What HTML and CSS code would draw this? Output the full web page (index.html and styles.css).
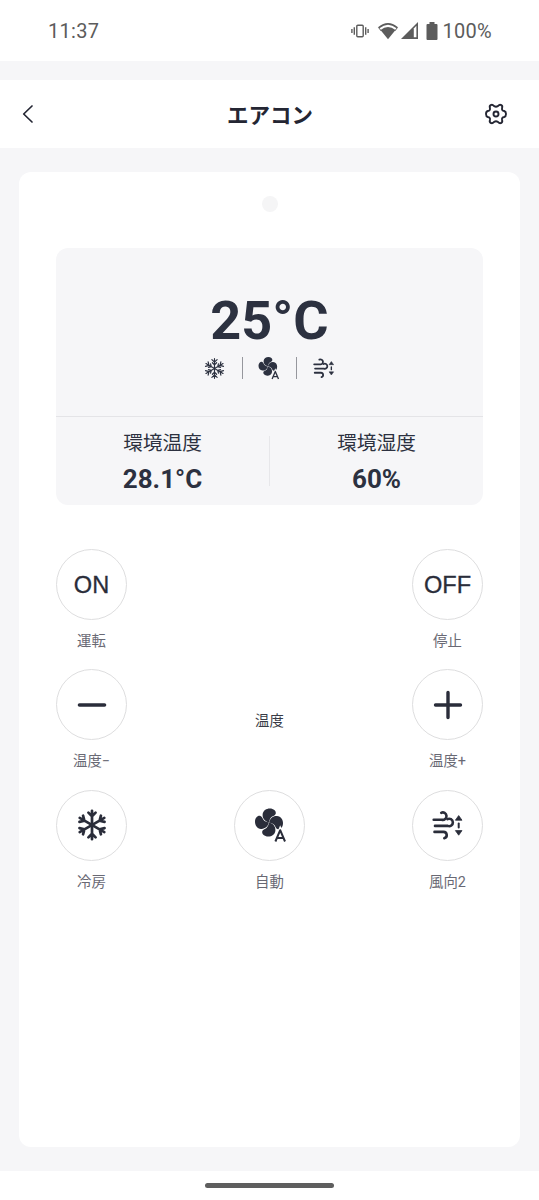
FILE: index.html
```html
<!DOCTYPE html>
<html lang="ja">
<head>
<meta charset="utf-8">
<title>エアコン</title>
<link rel="stylesheet" href="styles.css">
</head>
<body>
<svg class="defs" aria-hidden="true">
  <symbol id="snow" viewBox="-16 -16 32 32">
    <g id="snow-axis" fill="none" stroke="currentColor" stroke-width="2.7" stroke-linecap="round" stroke-linejoin="round">
      <path d="M0-14.2V14.2M-3.6-12.4L0-8.8L3.6-12.4M-3.6 12.4L0 8.8L3.6 12.4"/>
    </g>
    <use href="#snow-axis" transform="rotate(60)"/>
    <use href="#snow-axis" transform="rotate(120)"/>
  </symbol>
  <symbol id="snow-fine" viewBox="-16 -16 32 32">
    <g id="fine-axis" fill="none" stroke="currentColor" stroke-width="1.8" stroke-linecap="round" stroke-linejoin="round">
      <path d="M0-15V15M-4-13.5L0-9.7L4-13.5M-4 13.5L0 9.7L4 13.5M-3.2-8.8L0-5.6L3.2-8.8M-3.2 8.8L0 5.6L3.2 8.8"/>
    </g>
    <use href="#fine-axis" transform="rotate(60)"/>
    <use href="#fine-axis" transform="rotate(120)"/>
  </symbol>
  <symbol id="fan" viewBox="0 0 34 36">
    <g transform="translate(16 15.5)" fill="currentColor">
      <path id="blade" d="M-.1-.1C-4-1-6.7-4-6.4-8C-6-12-2.7-14 .8-14C4.6-14 7.2-11.6 6.8-9C6.4-6.9 3.9-6.5 2.5-5.4C1.1-4.3.6-2.5-.1-.1Z"/>
      <use href="#blade" transform="rotate(90)"/>
      <use href="#blade" transform="rotate(180)"/>
      <use href="#blade" transform="rotate(270)"/>
    </g>
    <path d="M22.4 34.5L27.2 23.2L32 34.5M24.2 31H30.2" fill="none" stroke="var(--surface)" stroke-width="3.8"/>
    <path d="M22.4 34.5L27.2 23.2L32 34.5M24.2 31H30.2" fill="none" stroke="currentColor" stroke-width="2" stroke-linejoin="round"/>
  </symbol>
  <symbol id="wind" viewBox="0 0 32 32">
    <g fill="none" stroke="currentColor" stroke-width="2.6" stroke-linecap="round">
      <path d="M1.7 10.7H9.8A3.7 3.7 0 1 0 9.2 3.8"/>
      <path d="M3 16.9H15.8A3.7 3.7 0 1 0 15.4 10.2"/>
      <path d="M2.5 22.9H11.4A3.2 3.2 0 0 1 12.3 29.2"/>
      <path d="M26.7 14.6V18.4" stroke-width="2"/>
    </g>
    <path d="M26.7 6.6L30 11.2H23.4ZM26.7 26.2L30 21.6H23.4Z" fill="currentColor" stroke="currentColor" stroke-width=".8" stroke-linejoin="round"/>
  </symbol>
</svg>

<div class="statusbar">
  <span class="clock">11:37</span>
  <div class="status-icons">
    <svg class="vibrate" viewBox="0 0 18 14" fill="none" stroke="currentColor" stroke-width="1.4">
      <rect x="5.8" y="1.2" width="6.4" height="11.6" rx="1"/>
      <path d="M3.3 3.2V10.8M.9 5V9M14.7 3.2V10.8M17.1 5V9"/>
    </svg>
    <svg class="wifi" viewBox="0 0 20 18">
      <path d="M.9 5.6Q10-2 19.1 5.6" fill="none" stroke="currentColor" stroke-width="1.7"/>
      <path d="M2.5 8Q10 2.1 17.5 8L10 17.3Z" fill="currentColor"/>
      <path d="M.3 5.3L3.3 9M19.7 5.3L16.7 9" stroke="currentColor" stroke-width="1"/>
    </svg>
    <svg class="signal" viewBox="0 0 17 17">
      <path d="M0 17L17 0V17Z" fill="currentColor"/>
      <path d="M12.8 6.4L15.4 3.8V15.3H12.8Z" fill="#fff"/>
    </svg>
    <svg class="battery" viewBox="0 0 12 18">
      <path d="M3.5 0H8.5V2H10.5Q11.5 2 11.5 3V17Q11.5 18 10.5 18H1.5Q.5 18 .5 17V3Q.5 2 1.5 2H3.5Z" fill="currentColor"/>
    </svg>
    <span class="percent">100%</span>
  </div>
</div>

<header class="titlebar">
  <svg class="back" viewBox="0 0 12 18" fill="none" stroke="currentColor" stroke-width="1.7" stroke-linecap="round" stroke-linejoin="round"><path d="M10 1L1.7 9L10 17"/></svg>
  <h1 class="title">エアコン</h1>
  <svg class="gear" viewBox="-11 -11 22 22" fill="none" stroke="currentColor" stroke-width="1.9" stroke-linejoin="round">
    <path d="M-5-9C-3.6-9.9-2.7-8.8-1.8-7.8Q0-6.8 1.8-7.8C2.7-8.8 3.6-9.9 5-9Q6.8-8.3 6.1-6.1Q5.4-3.5 8.2-3C9.6-2.6 10-1.8 10 0S9.6 2.6 8.2 3Q5.4 3.5 6.1 6.1Q6.8 8.3 5 9C3.6 9.9 2.7 8.8 1.8 7.8Q0 6.8-1.8 7.8C-2.7 8.8-3.6 9.9-5 9Q-6.8 8.3-6.1 6.1Q-5.4 3.5-8.2 3C-9.6 2.6-10 1.8-10 0S-9.6-2.6-8.2-3Q-5.4-3.5-6.1-6.1Q-6.8-8.3-5-9Z"/>
    <circle r="2.5"/>
  </svg>
</header>

<main class="stage">
  <section class="remote">
    <span class="led"></span>
    <div class="display">
      <div class="current">
        <div class="setpoint">25°C</div>
        <div class="modes">
          <svg class="mode snow-sm"><use href="#snow-fine"/></svg>
          <i class="bar"></i>
          <svg class="mode fan-sm"><use href="#fan"/></svg>
          <i class="bar"></i>
          <svg class="mode wind-sm"><use href="#wind"/></svg>
        </div>
      </div>
      <div class="ambient">
        <div class="reading"><span class="name">環境温度</span><strong class="value">28.1°C</strong></div>
        <i class="split"></i>
        <div class="reading"><span class="name">環境湿度</span><strong class="value">60%</strong></div>
      </div>
    </div>
    <div class="keys">
      <div class="key"><button class="round">ON</button><span class="label">運転</span></div>
      <div></div>
      <div class="key"><button class="round">OFF</button><span class="label">停止</span></div>

      <div class="key"><button class="round"><svg class="glyph" viewBox="0 0 32 32"><path d="M3.5 16H28.5" stroke="currentColor" stroke-width="3.6" stroke-linecap="round"/></svg></button><span class="label">温度−</span></div>
      <div class="caption">温度</div>
      <div class="key"><button class="round"><svg class="glyph" viewBox="0 0 32 32"><path d="M3.5 16H28.5M16 3.5V28.5" stroke="currentColor" stroke-width="3.4" stroke-linecap="round"/></svg></button><span class="label">温度+</span></div>

      <div class="key"><button class="round"><svg class="glyph"><use href="#snow"/></svg></button><span class="label">冷房</span></div>
      <div class="key"><button class="round"><svg class="glyph-fan"><use href="#fan"/></svg></button><span class="label">自動</span></div>
      <div class="key"><button class="round"><svg class="glyph"><use href="#wind"/></svg></button><span class="label">風向2</span></div>
    </div>
  </section>
</main>

<footer class="navbar"><span class="handle"></span></footer>
</body>
</html>
```

FILE: styles.css
```css
* { box-sizing: border-box; }

body {
  margin: 0;
  height: 1200px;
  display: flex;
  flex-direction: column;
  background: #f6f6f8;
  color: #2c3140;
  font-family: Roboto, "Noto Sans CJK JP", sans-serif;
}

svg { display: block; flex: none; overflow: visible; }
.defs { position: absolute; width: 0; height: 0; }

.statusbar {
  height: 61px;
  padding: 0 47px 0 48px;
  display: flex;
  align-items: center;
  justify-content: space-between;
  background: #fff;
  color: #5c5c5c;
  font-size: 20px;
  line-height: 24px;
}
.clock { letter-spacing: .3px; }
.status-icons { display: flex; align-items: center; }
.vibrate { width: 18px; height: 14px; margin-right: 9px; }
.wifi { width: 20px; height: 18px; margin-right: 3px; }
.signal { width: 17px; height: 17px; margin-right: 8px; }
.battery { width: 12px; height: 18px; margin-right: 4px; }
.percent { letter-spacing: .3px; }

.titlebar {
  height: 68px;
  margin-top: 19px;
  padding: 0 32px 0 22px;
  display: grid;
  grid-template-columns: 22px 1fr 22px;
  align-items: center;
  background: #fff;
  color: #242633;
}
.back { width: 12px; height: 18px; }
.title {
  margin: 0 0 0 11px;
  text-align: center;
  font: 700 21.5px/32px "Noto Sans CJK JP", sans-serif;
}
.gear { width: 22px; height: 22px; }

.stage { height: 1023px; padding: 24px 19px; }
.remote {
  --surface: #fff;
  height: 975px;
  padding: 24px 36px 0 37px;
  display: flex;
  flex-direction: column;
  background: #fff;
  border-radius: 12px;
}
.led { width: 16px; height: 16px; align-self: center; border-radius: 50%; background: #f5f5f6; }

.display {
  --surface: #f6f6f8;
  height: 257px;
  margin: 36px 1px 0 0;
  background: #f6f6f8;
  border-radius: 12px;
}
.current {
  height: 169px;
  padding-top: 41px;
  display: flex;
  flex-direction: column;
  align-items: center;
  border-bottom: 1px solid #e4e4e7;
}
.setpoint { font-size: 54px; font-weight: 700; line-height: 64px; }
.modes { height: 24px; margin-top: 3px; display: flex; align-items: center; justify-content: center; }
.bar { width: 1px; height: 22px; background: #96979d; }
.snow-sm { width: 21px; height: 21px; margin-right: 17px; }
.fan-sm { width: 23px; height: 24px; margin: 0 16px 0 14px; }
.wind-sm { width: 22px; height: 22px; margin-left: 16px; }

.ambient { height: 88px; display: grid; grid-template-columns: 1fr 1px 1fr; align-items: center; }
.reading { display: flex; flex-direction: column; align-items: center; }
.name { font: 400 19.7px/30px "Noto Sans CJK JP", sans-serif; }
.value { margin-top: 6px; font-size: 26px; line-height: 32px; font-weight: 700; }
.split { height: 50px; background: #e7e7ea; }

.keys {
  margin: 44px 1px 0 0;
  display: grid;
  grid-template-columns: 71px 71px 71px;
  grid-auto-rows: 120.3px;
  justify-content: space-between;
}
.key { display: flex; flex-direction: column; align-items: center; }
.round {
  width: 71px;
  height: 71px;
  padding: 0;
  display: flex;
  align-items: center;
  justify-content: center;
  border: 1.5px solid #dededf;
  border-radius: 50%;
  background: #fff;
  color: #2a2d3a;
  font: 400 23.6px/28px "Liberation Sans", Arial, sans-serif;
  -webkit-text-stroke: .3px currentColor;
}
.glyph { width: 32px; height: 32px; }
.glyph-fan { width: 34px; height: 36px; }
.label { margin-top: 12px; color: #696974; font: 400 14.4px/20px Roboto, "Noto Sans CJK JP", sans-serif; white-space: nowrap; }
.caption { padding-top: 43px; text-align: center; color: #383b46; font: 400 14.4px/20px Roboto, "Noto Sans CJK JP", sans-serif; }

.navbar { height: 29px; padding-top: 12px; display: flex; justify-content: center; background: #fff; }
.handle { width: 129px; height: 5px; border-radius: 3px; background: #5e5e5e; }
```
